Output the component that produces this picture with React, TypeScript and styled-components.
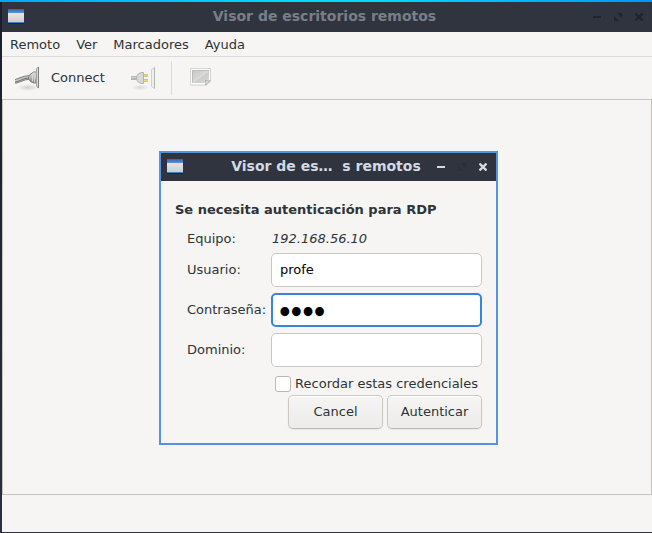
import React, { useState } from "react";
import styled, { createGlobalStyle } from "styled-components";

const GlobalStyle = createGlobalStyle`
  * { box-sizing: border-box; }
  body {
    margin: 0;
    background: #1f2230;
    color: #2e3436;
    font: 13px/18px "DejaVu Sans", sans-serif;
  }
  button, input { font: inherit; color: inherit; }
`;

const Desktop = styled.div`
  display: flex;
  flex-direction: column;
  min-height: 100vh;
  padding: 0 0 1px 2px;
  background: linear-gradient(#1a1d2b, #2b2e40);
`;

const AccentStripe = styled.div`
  height: 2px;
  margin-left: -2px;
  background: linear-gradient(90deg, #00a8fc, #00dcfa 45%, #00dcfa 58%, #0096fa);
`;

const Window = styled.div`
  display: flex;
  flex: 1;
  flex-direction: column;
  background: #f6f5f4;
`;

const TitleBar = styled.header<{ $active?: boolean }>`
  display: flex;
  align-items: center;
  height: ${(p) => (p.$active ? 28 : 30)}px;
  padding: 0 5px 0 6px;
  background: #2f343f;
  color: ${(p) => (p.$active ? "#d3dae3" : "#7a7f87")};
`;

const Title = styled.h1`
  flex: 1;
  margin: 0;
  padding: 0 0 2px 36px;
  overflow: hidden;
  font-size: 14px;
  line-height: 18px;
  text-align: center;
  white-space: pre;
`;

const WindowButtons = styled.div`
  display: flex;
  gap: 5px;
  padding-bottom: 1px;
`;

const WindowButton = styled.button<{ $color: string }>`
  display: flex;
  align-items: center;
  justify-content: center;
  width: 16px;
  height: 16px;
  padding: 0;
  border: 0;
  background: none;
  color: ${(p) => p.$color};
`;

const MenuBar = styled.nav`
  display: flex;
  height: 25px;
  padding: 1px 0 0 8px;
  gap: 16px;
  border-bottom: 1px solid #dcdad8;
`;

const MenuItem = styled.button`
  padding: 0;
  border: 0;
  background: none;
`;

const ToolBar = styled.div`
  display: flex;
  align-items: center;
  height: 42px;
  padding-left: 13px;
`;

const ToolButton = styled.button`
  display: flex;
  align-items: center;
  gap: 11px;
  padding: 0;
  border: 0;
  background: none;
  & + & { margin-left: 26px; }
`;

const Separator = styled.div`
  width: 1px;
  height: 34px;
  margin: 0 16px 0 14px;
  background: #dcdad8;
`;

const Viewport = styled.main`
  display: flex;
  flex: 1;
  align-items: center;
  justify-content: center;
  padding: 2px 0 0 3px;
  border: 1px solid #c6c3bc;
`;

const StatusBar = styled.footer`
  height: 37px;
`;

const Dialog = styled.section`
  width: 339px;
  max-width: 100%;
  border: 2px solid #5294e2;
  background: #f6f5f4;
`;

const Form = styled.form`
  padding: 20px 14px 14px;
`;

const Heading = styled.h2`
  margin: 0 0 11px;
  font-size: 13px;
  line-height: 18px;
`;

const Fields = styled.div`
  display: grid;
  grid-template-columns: 78px 1fr;
  grid-template-rows: 17px;
  gap: 6px;
  align-items: center;
  padding-left: 12px;
`;

const FieldLabel = styled.label`
  white-space: nowrap;
`;

const Host = styled.em`
  padding-left: 1px;
`;

const Entry = styled.input`
  width: 100%;
  height: 34px;
  padding: 0 8px 2px;
  border: 1px solid #cdc7c2;
  border-radius: 5px;
  outline: 0;
  background: #fff;
  color: #000;
`;

const PasswordEntry = styled(Entry)`
  padding: 0 6px;
  border: 2px solid #3584e4;
  font: bold 20px/30px Lato, sans-serif;
`;

const Remember = styled.label`
  display: flex;
  align-items: center;
  justify-content: flex-end;
  gap: 4px;
  padding: 8px 4px 2px 0;
`;

const CheckBox = styled.input`
  width: 16px;
  height: 16px;
  margin: 0;
  appearance: none;
  border: 1px solid #bfb8b1;
  border-radius: 3px;
  background: #fff;
  &:checked { background: #3584e4; }
`;

const Actions = styled.div`
  display: flex;
  justify-content: flex-end;
  gap: 4px;
`;

const ActionButton = styled.button`
  width: 95px;
  height: 34px;
  padding: 0;
  border: 1px solid #cdc7c2;
  border-bottom-color: #bfb8b1;
  border-radius: 5px;
  background: linear-gradient(#f6f5f4, #edebe9);
  box-shadow: inset 0 1px #fff, 0 1px 2px #0000000f;
`;

function AppIcon({ id }: { id: string }) {
  return (
    <svg width="16" height="18" viewBox="0 0 16 18" aria-hidden="true">
      <defs>
        <linearGradient id={`${id}-top`} x2="0" y2="1">
          <stop stopColor="#2f62ad" />
          <stop offset="1" stopColor="#5b95dd" />
        </linearGradient>
        <linearGradient id={`${id}-page`} x2="0" y2="1">
          <stop stopColor="#f0f0ef" />
          <stop offset="1" stopColor="#cbcbca" />
        </linearGradient>
      </defs>
      <path d="M0 15h16v1H0z" fill="#202630" />
      <path d="M0 1h16v14H0z" fill={`url(#${id}-page)`} />
      <path d="M0 1h16v4H0z" fill={`url(#${id}-top)`} />
      <path d="M0 14h16v1H0z" fill="#4a7dbd" />
    </svg>
  );
}

function Controls({ colors }: { colors: [string, string, string] }) {
  return (
    <WindowButtons>
      <WindowButton $color={colors[0]} aria-label="Minimizar">
        <svg width="8" height="8"><path d="M0 3h8v2H0z" fill="currentColor" /></svg>
      </WindowButton>
      <WindowButton $color={colors[1]} aria-label="Maximizar">
        <svg width="8" height="8"><path d="M3 0h5v5zM0 3l5 5H0z" fill="currentColor" /></svg>
      </WindowButton>
      <WindowButton $color={colors[2]} aria-label="Cerrar">
        <svg width="8" height="8"><path d="M.5.5l7 7M7.500.500l-7 7" stroke="currentColor" strokeWidth="2.3" /></svg>
      </WindowButton>
    </WindowButtons>
  );
}

function ConnectIcon() {
  return (
    <svg width="25" height="26" viewBox="0 0 25 26" aria-hidden="true">
      <defs>
        <linearGradient id="plug" x2="0" y2="1">
          <stop stopColor="#e2e4df" /><stop offset=".5" stopColor="#b9bcb6" /><stop offset="1" stopColor="#777a73" />
        </linearGradient>
        <radialGradient id="plugShade"><stop stopColor="#000" stopOpacity=".15" /><stop offset="1" stopColor="#000" stopOpacity="0" /></radialGradient>
      </defs>
      <ellipse cx="13" cy="22.500" rx="11" ry="3.500" fill="url(#plugShade)" />
      <path d="M0 16.500C5 15.500 8 12.500 14 12.500" fill="none" stroke="#6a6d68" strokeWidth="4.500" />
      <path d="M0 15.800C5 14.800 8 11.800 14 11.800" fill="none" stroke="#c8cac5" strokeWidth="1.500" />
      <path d="M0 18C5 17 8 14 14 13.800" fill="none" stroke="#a0a39d" />
      <path d="M21.500 7H18.500L15 9.500 13.500 12v2l2 2.500 3 1.500h3z" fill="url(#plug)" stroke="#80837c" />
      <path d="M17.500 9v7.500M19.500 8v9.500" stroke="#d6d8d3" />
      <path d="M21.500 3.500 23.500 2v21l-2-1.500z" fill="#d8dad5" stroke="#a5a8a2" />
      <path d="M23.500 2v21" stroke="#7b7e77" />
    </svg>
  );
}

function DisconnectIcon() {
  return (
    <svg width="26" height="26" viewBox="0 0 26 26" aria-hidden="true">
      <defs>
        <radialGradient id="discShade"><stop stopColor="#000" stopOpacity=".12" /><stop offset="1" stopColor="#000" stopOpacity="0" /></radialGradient>
      </defs>
      <ellipse cx="9" cy="22.500" rx="9" ry="3" fill="url(#discShade)" />
      <path d="M0 13h6" stroke="#b3b5b1" strokeWidth="4" />
      <path d="M0 12.500h6" stroke="#d6d7d4" />
      <path d="M12.500 7.500H10L6.500 9.500 5.500 12v2l1 2.500 3.500 2h2.500z" fill="#d9dad7" stroke="#b3b5b1" />
      <path d="M13 10.500h4M13 15.500h4" stroke="#c9bf90" strokeWidth="3" />
      <path d="M13 10.500h4M13 15.500h4" stroke="#f5df60" />
      <path d="M20.500 4.500 23.500 2.500v21l-3-2z" fill="#efefed" stroke="#d0d1ce" />
      <path d="M23.500 2.500v21" stroke="#b3b5b1" />
    </svg>
  );
}

function ScreenIcon() {
  return (
    <svg width="24" height="24" viewBox="0 0 24 24" aria-hidden="true">
      <defs>
        <linearGradient id="screen" x2="1" y2="1">
          <stop stopColor="#c6c8c4" /><stop offset=".55" stopColor="#dadbd8" /><stop offset=".56" stopColor="#cbccc9" /><stop offset="1" stopColor="#dcddda" />
        </linearGradient>
      </defs>
      <path d="M2.500 2.500h20v13l-4 3.500h-16z" fill="#fbfbfa" stroke="#d6d7d4" />
      <path d="M4 4h17v10.500L17.500 17H4z" fill="url(#screen)" />
      <path d="M4.500 16.500v-12h16" fill="none" stroke="#bcbeba" />
      <path d="m17.500 19 5-4.500c-1 .7-3 .7-5-.500.5 1.800.5 3.300 0 5z" fill="#e8e9e6" stroke="#b0b2ae" />
      <path d="M3 19.500h16" stroke="#e0e0dd" />
    </svg>
  );
}

export default function App() {
  const [user, setUser] = useState("profe");
  const [password, setPassword] = useState("1234");
  const [domain, setDomain] = useState("");

  return (
    <>
      <GlobalStyle />
      <Desktop>
        <AccentStripe />
        <Window>
          <TitleBar>
            <AppIcon id="main" />
            <Title>Visor de escritorios remotos</Title>
            <Controls colors={["#20242b", "#20242b", "#20242b"]} />
          </TitleBar>
          <MenuBar>
            {["Remoto", "Ver", "Marcadores", "Ayuda"].map((name) => (
              <MenuItem key={name}>{name}</MenuItem>
            ))}
          </MenuBar>
          <ToolBar>
            <ToolButton><ConnectIcon />Connect</ToolButton>
            <ToolButton aria-label="Desconectar" disabled><DisconnectIcon /></ToolButton>
            <Separator />
            <ToolButton aria-label="Pantalla completa" disabled><ScreenIcon /></ToolButton>
          </ToolBar>
          <Viewport>
            <Dialog role="dialog" aria-labelledby="auth-heading">
              <TitleBar $active>
                <AppIcon id="dialog" />
                <Title as="div"><b>{"Visor de es…  s remotos"}</b></Title>
                <Controls colors={["#d3dae3", "#292e37", "#d3dae3"]} />
              </TitleBar>
              <Form onSubmit={(e) => e.preventDefault()}>
                <Heading id="auth-heading">Se necesita autenticación para RDP</Heading>
                <Fields>
                  <span>Equipo:</span>
                  <Host>192.168.56.10</Host>
                  <FieldLabel htmlFor="user">Usuario:</FieldLabel>
                  <Entry id="user" value={user} onChange={(e) => setUser(e.target.value)} />
                  <FieldLabel htmlFor="password">Contraseña:</FieldLabel>
                  <PasswordEntry id="password" type="password" value={password} onChange={(e) => setPassword(e.target.value)} />
                  <FieldLabel htmlFor="domain">Dominio:</FieldLabel>
                  <Entry id="domain" value={domain} onChange={(e) => setDomain(e.target.value)} />
                </Fields>
                <Remember>
                  <CheckBox type="checkbox" />
                  Recordar estas credenciales
                </Remember>
                <Actions>
                  <ActionButton type="button">Cancel</ActionButton>
                  <ActionButton type="submit">Autenticar</ActionButton>
                </Actions>
              </Form>
            </Dialog>
          </Viewport>
          <StatusBar />
        </Window>
      </Desktop>
    </>
  );
}
